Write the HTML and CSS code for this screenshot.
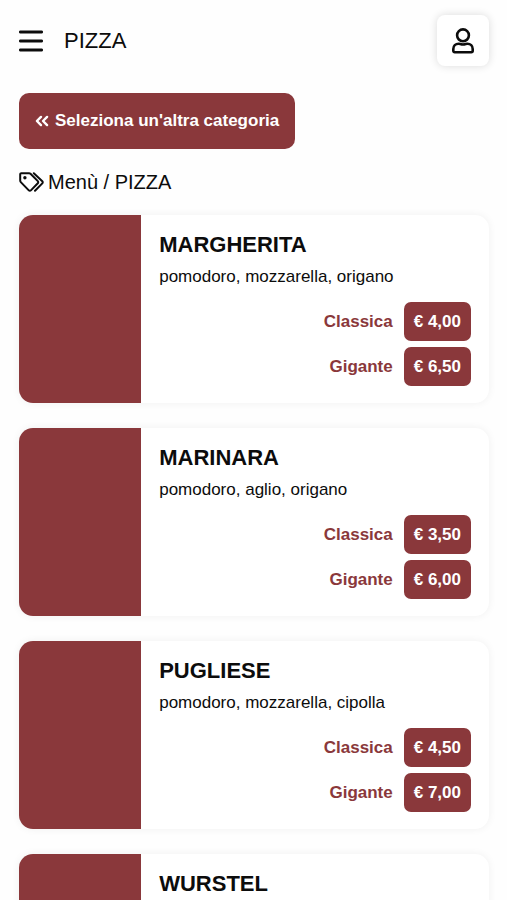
FILE: index.html
```html
<!DOCTYPE html>
<html lang="it">

<head>
    <meta charset="UTF-8">
    <meta name="viewport" content="width=device-width, initial-scale=1.0">
    <title>PIZZA</title>
    <link rel="stylesheet" href="styles.css">
</head>

<body>
    <header class="topbar">
        <button class="menu-button" type="button" aria-label="Menu">
            <svg viewBox="0 0 24 22" width="24" height="22" aria-hidden="true">
                <path d="M1.4 2h21.2M1.4 11h21.2M1.4 20h21.2" fill="none" stroke="currentColor" stroke-width="2.9" stroke-linecap="round" />
            </svg>
        </button>
        <h1 class="page-title">PIZZA</h1>
        <button class="user-button" type="button" aria-label="Account">
            <svg viewBox="0 0 22 26" width="22" height="26" aria-hidden="true">
                <g fill="none" stroke="currentColor" stroke-width="2.6" stroke-linejoin="round">
                    <circle cx="11" cy="7.3" r="5.9" />
                    <path d="M6.6 15.7c1.4 0 2.2.8 4.4.8s3-.8 4.4-.8c3 0 5.3 2.4 5.3 5.4v1.7c0 .8-.6 1.4-1.4 1.4H2.7c-.8 0-1.4-.6-1.4-1.4v-1.7c0-3 2.3-5.4 5.3-5.4z" />
                </g>
            </svg>
        </button>
    </header>

    <main class="content">
        <a class="back-button" href="#">
            <svg viewBox="0 0 14 12" width="14" height="12" aria-hidden="true">
                <path d="M6 1.9L1.9 6 6 10.100M12.100 1.900L8 6l4.100 4.100" fill="none" stroke="currentColor" stroke-width="2.400" stroke-linecap="round" stroke-linejoin="round" />
            </svg>
            Seleziona un'altra categoria
        </a>

        <div class="breadcrumb">
            <svg viewBox="0 0 25 20" width="25" height="20" aria-hidden="true">
                <g fill="none" stroke="currentColor" stroke-width="2" stroke-linecap="round" stroke-linejoin="round">
                    <path d="M1.2 2.300v6.300c0 .6.200 1.100.6 1.500l8 8.300c.6.6 1.500.6 2.100 0l6.900-7.200c.6-.6.6-1.500 0-2.100l-7.300-7.300c-.4-.4-.9-.6-1.500-.6H2.300c-.6 0-1.100.5-1.100 1.100z" />
                    <path d="M14.800 1.200l8.500 8.100c.6.6.6 1.500 0 2.100l-7.300 7.400" />
                </g>
                <circle cx="5.900" cy="5.800" r="1.700" fill="currentColor" />
            </svg>
            <span>Menù / PIZZA</span>
        </div>

        <div class="products">
            <article class="card">
                <div class="card-image"></div>
                <div class="card-body">
                    <h2 class="card-title">MARGHERITA</h2>
                    <p class="card-text">pomodoro, mozzarella, origano</p>
                    <div class="price-row"><span>Classica</span><button class="price" type="button">€ 4,00</button></div>
                    <div class="price-row"><span>Gigante</span><button class="price" type="button">€ 6,50</button></div>
                </div>
            </article>

            <article class="card">
                <div class="card-image"></div>
                <div class="card-body">
                    <h2 class="card-title">MARINARA</h2>
                    <p class="card-text">pomodoro, aglio, origano</p>
                    <div class="price-row"><span>Classica</span><button class="price" type="button">€ 3,50</button></div>
                    <div class="price-row"><span>Gigante</span><button class="price" type="button">€ 6,00</button></div>
                </div>
            </article>

            <article class="card">
                <div class="card-image"></div>
                <div class="card-body">
                    <h2 class="card-title">PUGLIESE</h2>
                    <p class="card-text">pomodoro, mozzarella, cipolla</p>
                    <div class="price-row"><span>Classica</span><button class="price" type="button">€ 4,50</button></div>
                    <div class="price-row"><span>Gigante</span><button class="price" type="button">€ 7,00</button></div>
                </div>
            </article>

            <article class="card">
                <div class="card-image"></div>
                <div class="card-body">
                    <h2 class="card-title">WURSTEL</h2>
                </div>
            </article>
        </div>
    </main>
</body>

</html>
```
FILE: styles.css
```css
* {
    box-sizing: border-box;
}

body {
    font-family: "Liberation Sans", Arial, sans-serif;
    color: #0c0c0c;
    background: #fefefe;
    margin: 0;
}

button {
    font-family: inherit;
    border: none;
    cursor: pointer;
}

svg {
    display: block;
    flex: none;
}

.topbar {
    display: flex;
    align-items: center;
    padding: 15px 18px 0 19px;
}

.menu-button {
    padding: 0;
    color: inherit;
    background: none;
}

.page-title {
    flex: 1;
    margin: 0 0 0 21px;
    font-size: 22px;
    font-weight: 400;
}

.user-button {
    display: flex;
    justify-content: center;
    align-items: center;
    width: 52px;
    height: 51px;
    padding: 0;
    color: inherit;
    background: #fff;
    border-radius: 8px;
    box-shadow: 0 0 8px rgba(0, 0, 0, 0.14);
}

.content {
    padding: 27px 18px 0 19px;
}

.back-button {
    display: inline-flex;
    align-items: center;
    gap: 6px;
    height: 56px;
    padding: 0 16px;
    font-size: 17px;
    font-weight: 700;
    color: #fff;
    background: #8a383b;
    border-radius: 10px;
    text-decoration: none;
}

.breadcrumb {
    display: flex;
    align-items: center;
    gap: 4px;
    margin: 21px 0;
    font-size: 20px;
    line-height: 24px;
}

.products {
    display: flex;
    flex-direction: column;
    gap: 25px;
}

.card {
    display: flex;
    min-height: 188px;
    background: #fff;
    border-radius: 14px;
    box-shadow: 0 0 8px rgba(0, 0, 0, 0.06);
    overflow: hidden;
}

.card-image {
    width: 26%;
    background: #8a383b;
}

.card-body {
    flex: 1;
    padding: 16px 18px 11px;
}

.card-title {
    margin: 0;
    font-size: 22px;
    line-height: 28px;
}

.card-text {
    margin: 7px 0 14px;
    font-size: 17px;
    line-height: 22px;
}

.price-row {
    display: flex;
    justify-content: flex-end;
    align-items: center;
    gap: 11px;
    margin-bottom: 6px;
    font-size: 17px;
    font-weight: 700;
    color: #8a383b;
}

.price {
    height: 39px;
    padding: 0 10px;
    font-size: 17px;
    font-weight: 700;
    color: #fff;
    background: #8a383b;
    border-radius: 7px;
}
```
